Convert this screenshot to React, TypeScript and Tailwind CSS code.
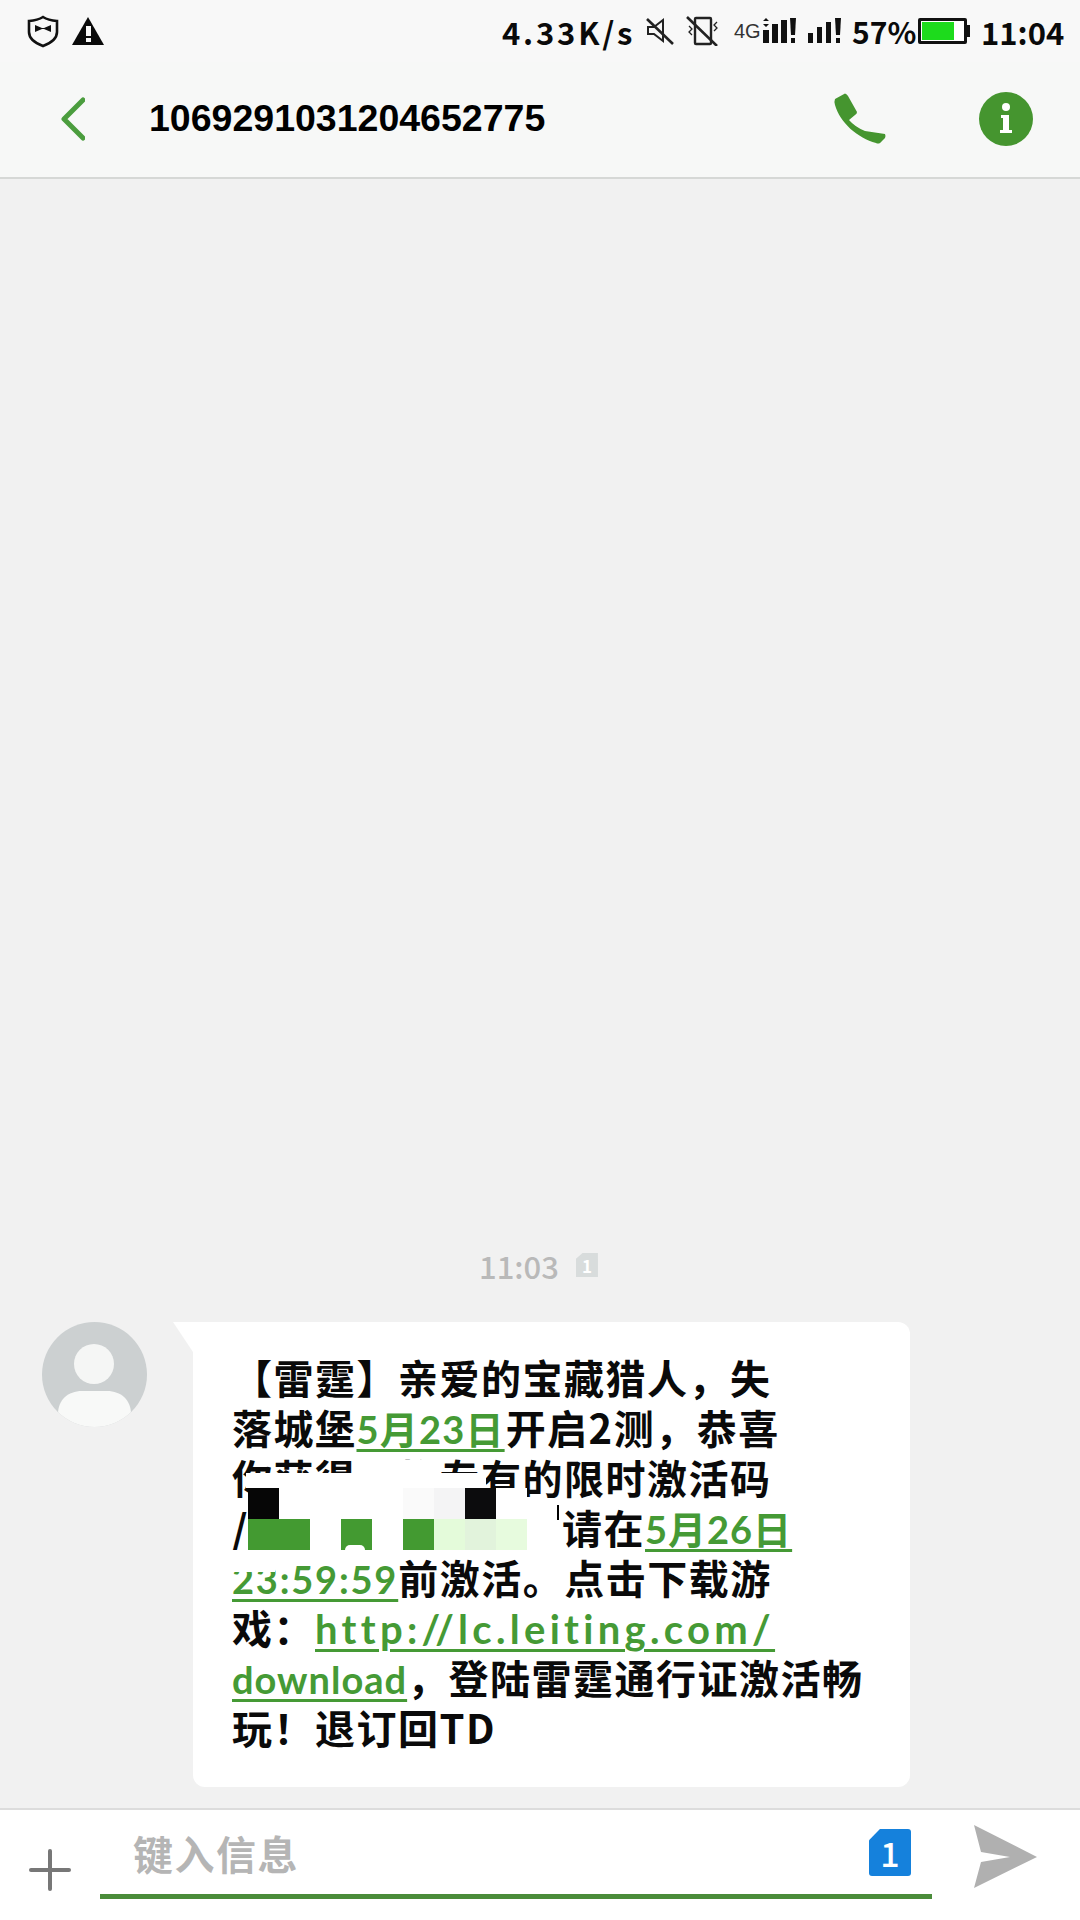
import React from 'react';

// Coarse mosaic laid over the hidden part of the activation code
const MOSAIC = [
  '#060606', '#ffffff', '#ffffff', '#ffffff', '#ffffff', '#fafafa', '#f4f4f5', '#0c0c0d', '#ffffff', 'transparent',
  '#439a31', '#439a31', '#ffffff', '#439a31', '#ffffff', '#439a31', '#e4fbda', '#e2f3dc', '#e7fbde', 'transparent',
];

const Link: React.FC<{ children: React.ReactNode; className?: string }> = ({ children, className }) => (
  <span
    className={`font-['Lato','Noto_Sans_CJK_SC',sans-serif] font-bold text-[#459a35] underline decoration-[3px] underline-offset-[5px] ${className ?? ''}`}
  >
    {children}
  </span>
);

const Line: React.FC<{ children: React.ReactNode }> = ({ children }) => (
  <div className="h-[50px] whitespace-nowrap">{children}</div>
);

const StatusIcons = () => (
  <div className="flex items-center">
    {/* Muted speaker */}
    <svg width="28" height="28" viewBox="0 0 28 28" fill="none" stroke="#222" strokeWidth="2" className="ml-[13px]">
      <path d="M2 10h6l9-7v21l-9-7H2z" />
      <path d="M1 2l26 25" strokeWidth="2.6" />
    </svg>
    {/* Vibration off */}
    <svg width="34" height="30" viewBox="0 0 34 30" fill="none" stroke="#222" strokeWidth="2" className="ml-[12px]">
      <rect x="9" y="2" width="16" height="26" rx="1" strokeWidth="2.4" />
      <path d="M3 10l3 3-3 3 3 3" strokeWidth="1.3" />
      <path d="M31 6l-3 3 3 3-3 3" strokeWidth="1.3" />
      <path d="M1 1l30 29" strokeWidth="2.6" />
    </svg>
    {/* 4G with first signal */}
    <span className="ml-[14px] w-[28px] font-['Liberation_Sans',sans-serif] text-[20px] leading-none text-[#333]">4G</span>
    <svg width="36" height="28" viewBox="0 0 36 28" fill="#111">
      <path d="M4 1l3 3H1zM4 10L1 7h6z" />
      <rect x="1" y="13" width="6" height="13" />
      <rect x="10" y="7" width="6" height="19" />
      <rect x="19" y="3" width="6" height="23" />
      <path d="M28 1h6l-1 17h-4z" />
      <rect x="29" y="21" width="4" height="5" />
    </svg>
    <svg width="34" height="28" viewBox="0 0 34 28" fill="#111" className="ml-[10px]">
      <rect x="0" y="16" width="5" height="10" />
      <rect x="9" y="10" width="5" height="16" />
      <rect x="18" y="5" width="5" height="21" />
      <path d="M27 1h6l-1 17h-4z" />
      <rect x="28" y="21" width="4" height="5" />
    </svg>
  </div>
);

export default function App() {
  return (
    <div className="flex h-[1920px] w-[1080px] flex-col overflow-hidden bg-[#f1f1f1] font-['Noto_Sans_CJK_SC','Liberation_Sans',sans-serif] text-[#0a0a0a]">
      {/* Status bar */}
      <div className="flex h-[62px] items-center bg-[#f8f8f8] pl-[27px]">
        <svg width="32" height="33" viewBox="0 0 32 33" fill="none" stroke="#111" strokeWidth="2.6">
          <path d="M16 2c4 2.500 8 3.500 14 4v11c0 7-6 11-14 14C8 28 2 24 2 17V6c6-.5 10-1.500 14-4z" />
          <path d="M8 10l7 3 2 0 7-3v7l-7-3h-2l-7 3z" fill="#111" stroke="none" />
        </svg>
        <svg width="34" height="30" viewBox="0 0 34 30" className="ml-[12px]">
          <path d="M17 1l16 28H1z" fill="#0a0a0a" />
          <rect x="15" y="10" width="5" height="10" fill="#f8f8f8" />
          <rect x="15" y="22" width="5" height="4" fill="#f8f8f8" />
        </svg>
        <span className="ml-[397px] w-[131px] whitespace-nowrap text-[31px] font-bold leading-none tracking-[2.800px]">4.33K/s</span>
        <StatusIcons />
        <span className="ml-[10px] w-[62px] whitespace-nowrap text-[30px] font-bold leading-none">57%</span>
        {/* Battery */}
        <div className="ml-[4px] flex items-center">
          <div className="flex h-[26px] w-[49px] items-stretch rounded-[2px] border-[3px] border-[#111] bg-white p-[1px]">
            <div className="w-[32px] bg-[#1ddb1c]" />
          </div>
          <div className="h-[12px] w-[3px] bg-[#111]" />
        </div>
        <span className="ml-[11px] whitespace-nowrap text-[31px] font-bold leading-none">11:04</span>
      </div>

      {/* Conversation header */}
      <div className="flex h-[117px] items-center border-b-2 border-[#d6d8d6] bg-[#f7f8f7] pb-[2px] pl-[61px]">
        <svg width="24" height="44" viewBox="0 0 24 44" fill="none" stroke="#4b9d3e" strokeWidth="5" strokeLinecap="round" strokeLinejoin="round">
          <path d="M22 3L3 22l19 19" />
        </svg>
        <span className="ml-[64px] w-[398px] font-['Liberation_Sans',sans-serif] text-[37.500px] font-bold leading-none text-black">1069291031204652775</span>
        <svg width="52" height="52" viewBox="0 0 52 52" className="ml-[287px]">
          <path d="M1 6L11 .5Q13 1 14 3l9 16q0 2-2 3l-6 5q6 7 16 11l20 3q1 2 0 4l-5 5q-2 1-4 0C24 45 6 30 1 12q-1-4 0-6z" fill="#45952f" />
        </svg>
        <svg width="54" height="54" viewBox="0 0 54 54" className="ml-[93px]">
          <circle cx="27" cy="27" r="27" fill="#45952f" />
          <circle cx="27" cy="15" r="4" fill="#fff" />
          <path d="M22 23h8v15h3v3H21v-3h3V26h-2z" fill="#fff" />
        </svg>
      </div>

      {/* Message list, pinned to the bottom */}
      <div className="flex flex-1 flex-col justify-end pb-[21px]">
        <div className="mb-[39px] flex h-[36px] items-center justify-center gap-[17px] pr-[3px]">
          <span className="text-[31px] font-medium leading-none text-[#b9b9b9]">11:03</span>
          <span className="flex h-[24px] w-[22px] items-center justify-center bg-[#d8dcdc] text-[17px] font-bold leading-none text-white [clip-path:polygon(30%_0,100%_0,100%_100%,0_100%,0_24%)]">
            1
          </span>
        </div>

        <div className="flex items-start pl-[42px]">
          {/* Contact avatar */}
          <svg width="105" height="105" viewBox="0 0 105 105" className="shrink-0">
            <defs>
              <clipPath id="avatar-clip">
                <circle cx="52.500" cy="52.500" r="52.500" />
              </clipPath>
            </defs>
            <circle cx="52.500" cy="52.500" r="52.500" fill="#ccd0d1" />
            <circle cx="52" cy="42" r="20" fill="#f5f6f5" />
            <path d="M16 105V92c0-14 10-23 24-23h25c14 0 24 9 24 23v13z" fill="#f8f9f8" clipPath="url(#avatar-clip)" />
          </svg>

          {/* Incoming bubble */}
          <div className="relative ml-[46px] h-[465px] w-[717px] rounded-[12px] rounded-tl-none bg-white pl-[39px] pt-[30px] text-[40px] font-bold leading-[50px] tracking-[1.500px]">
            <div className="absolute left-[-20px] top-0 h-[30px] w-[20px] bg-white [clip-path:polygon(0_0,100%_0,100%_100%)]" />

            <Line>【雷霆】亲爱的宝藏猎人，失</Line>
            <Line>
              落城堡<Link className="text-[38px] tracking-[1.200px]">5月23日</Link>
              <span className="ml-[1px]">开启2测，恭喜</span>
            </Line>
            <Line>你获得一枚专有的限时激活码</Line>
            <Line>
              <span className="inline-block w-[330px]">/</span>请在<Link className="text-[38px] tracking-[1px]">5月26日</Link>
            </Line>
            <Line>
              <Link className="text-[38px] tracking-[1.800px]">23:59:59</Link>前激活。点击下载游
            </Line>
            <Line>
              戏：<Link className="text-[40px] tracking-[4.300px]">http://lc.leiting.com/</Link>
            </Line>
            <Line>
              <Link className="text-[38px] tracking-[1px]">download</Link>，登陆雷霆通行证激活畅
            </Line>
            <Line>玩！退订回TD</Line>

            {/* Redaction over the code */}
            <div className="absolute left-[53px] top-[151px] h-[15px] w-[240px] bg-white" />
            <div className="absolute left-[205px] top-[138px] h-[13px] w-[42px] bg-white" />
            <div className="absolute left-[55px] top-[166px] grid h-[62px] w-[310px] grid-cols-10 grid-rows-2">
              {MOSAIC.map((color, i) => (
                <div key={i} style={{ backgroundColor: color }} />
              ))}
            </div>
            <div className="absolute left-[152px] top-[223px] h-[5px] w-[20px] rounded-t-full bg-white" />
            <div className="absolute left-[364px] top-[183px] h-[15px] w-[2px] bg-black" />
            <div className="absolute left-[39px] top-[228px] h-[22px] w-[43px] bg-white" />
          </div>
        </div>
      </div>

      {/* Composer */}
      <div className="flex h-[112px] items-start border-t-2 border-[#dcdcdc] bg-white">
        <div className="relative ml-[29px] mt-[39px] h-[42px] w-[42px] shrink-0">
          <div className="absolute left-0 top-[19px] h-[4px] w-[42px] rounded-full bg-[#777]" />
          <div className="absolute left-[19px] top-0 h-[42px] w-[4px] rounded-full bg-[#777]" />
        </div>
        <div className="ml-[29px] flex h-[89px] w-[832px] shrink-0 border-b-[5px] border-[#4a8c3a] pt-[23px]">
          <span className="ml-[33px] text-[40px] font-bold leading-[40px] tracking-[1.500px] text-[#b5b5b5]">键入信息</span>
          <span className="ml-auto mr-[21px] mt-[-4px] flex h-[47px] w-[42px] items-center justify-center rounded-[3px] bg-[#1581dc] text-[34px] font-medium leading-none text-white [clip-path:polygon(26%_0,100%_0,100%_100%,0_100%,0_24%)]">
            1
          </span>
        </div>
        <svg width="63" height="63" viewBox="0 0 63 63" className="ml-[42px] mt-[15px] shrink-0">
          <path d="M0 0l63 32L0 63l7-26 29-5-29-5z" fill="#b0b0b0" />
        </svg>
      </div>
    </div>
  );
}
